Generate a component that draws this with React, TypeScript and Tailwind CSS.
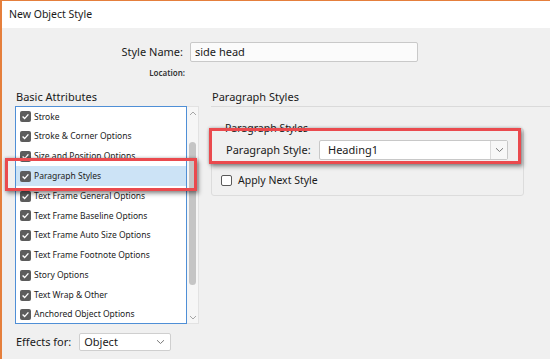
import React from "react";

const font = { fontFamily: '"Noto Sans", "Open Sans", Arial, sans-serif' };

function Check({ checked = true }: { checked?: boolean }) {
  if (!checked)
    return <span className="block w-[11px] h-[11px] rounded-[2px] border border-[#5a5a5a] bg-white" />;
  return (
    <span className="flex items-center justify-center w-[11px] h-[11px] rounded-[2px] bg-[#5c5c5c]">
      <svg width="9" height="9" viewBox="0 0 9 9">
        <path d="M1.6 4.6 L3.6 6.6 L7.4 2.4" stroke="white" strokeWidth="1.4" fill="none" />
      </svg>
    </span>
  );
}

function Chevron({ color = "#7a7a7a" }: { color?: string }) {
  return (
    <svg width="9" height="6" viewBox="0 0 9 6">
      <path d="M1 1.2 L4.5 4.5 L8 1.2" stroke={color} strokeWidth="1" fill="none" />
    </svg>
  );
}

const items = [
  "Stroke",
  "Stroke & Corner Options",
  "Size and Position Options",
  "Paragraph Styles",
  "Text Frame General Options",
  "Text Frame Baseline Options",
  "Text Frame Auto Size Options",
  "Text Frame Footnote Options",
  "Story Options",
  "Text Wrap & Other",
  "Anchored Object Options",
];

export default function App() {
  return (
    <div
      className="relative w-[550px] h-[359px] overflow-hidden bg-[#f0f0f0] border-l-2 border-t border-[#e57f3c] flex flex-col text-[#1a1a1a]"
      style={font}
    >
      <div className="h-[27px] bg-white flex items-center pl-[7px] text-[10.5px] shrink-0">New Object Style</div>

      <div className="flex items-center mt-[14px] h-[20px]">
        <div className="w-[182px] text-right text-[11px] pr-[1px]">Style Name:</div>
        <div className="ml-[6px] w-[228px] h-[20px] bg-[#fbfbfb] border border-[#c9c9c9] rounded-[2px] flex items-center pl-[4px] text-[11px]">
          side head
        </div>
      </div>

      <div className="flex h-[12px] mt-[5px] items-center">
        <div className="w-[183px] text-right text-[8px] font-semibold text-[#333]">Location:</div>
      </div>

      <div className="flex mt-[10px]">
        <div className="flex flex-col pl-[13px] w-[208px] shrink-0">
          <div className="h-[16px] text-[11px] flex items-center pl-px">Basic Attributes</div>
          <div className="flex h-[218px] mt-[1px]">
            <div className="w-[172px] border border-[#4f8fd6] bg-white flex flex-col pl-[3px] overflow-hidden">
              {items.map((t, i) => (
                <div
                  key={t}
                  className={`flex items-center gap-[3px] h-[19.8px] shrink-0 -ml-[3px] pl-[4px] ${
                    i === 3 ? "bg-[#cce3f6]" : ""
                  }`}
                >
                  <Check />
                  <span className="text-[8.5px] text-[#222]">{t}</span>
                </div>
              ))}
            </div>
            <div className="w-[12px] bg-[#f6f6f6] border border-l-0 border-[#e2e2e2] flex flex-col items-center pt-[4px] pb-[3px]">
              <svg width="8" height="5" viewBox="0 0 8 5" className="shrink-0">
                <path d="M1 4 L4 1 L7 4" stroke="#a6a6a6" strokeWidth="1" fill="none" />
              </svg>
              <div className="w-[7px] h-[143px] rounded-full bg-[#c5c5c5] mt-[26px] shrink-0" />
              <div className="flex-1" />
              <svg width="8" height="5" viewBox="0 0 8 5" className="shrink-0">
                <path d="M1 1 L4 4 L7 1" stroke="#a6a6a6" strokeWidth="1" fill="none" />
              </svg>
            </div>
          </div>
          <div className="flex items-center mt-[9px] ml-[1px]">
            <span className="text-[11px]">Effects for:</span>
            <div className="ml-[8px] w-[92px] h-[18px] bg-white border border-[#cfcfcf] rounded-[2px] flex items-center justify-between pl-[4px] pr-[5px] text-[11px]">
              <span>Object</span>
              <Chevron />
            </div>
          </div>
        </div>

        <div className="flex-1 flex flex-col pl-[1px]">
          <div className="h-[16px] text-[11px] flex items-center pl-[1px]">Paragraph Styles</div>
          <div className="h-px bg-[#dadada] mt-[1px]" />
          <div className="relative mt-[21px] w-[313px] h-[68px] border border-[#dcdcdc] rounded-[3px]">
            <div className="absolute -top-[9px] left-[12px] bg-[#f0f0f0] text-[10.5px] px-[1px] leading-[16px]">Paragraph Styles</div>
            <div className="flex items-center mt-[11px] ml-[14px]">
              <span className="text-[11px] w-[93px]">Paragraph Style:</span>
              <div className="w-[189px] h-[20px] bg-white border border-[#c8c8c8] rounded-[2px] flex items-center text-[11px]">
                <span className="flex-1 pl-[8px]">Heading1</span>
                <span className="w-[17px] h-full border-l border-[#dadada] bg-[#f7f7f7] flex items-center justify-center">
                  <Chevron />
                </span>
              </div>
            </div>
            <div className="flex items-center mt-[13px] ml-[9px] gap-[6px]">
              <Check checked={false} />
              <span className="text-[10.5px]">Apply Next Style</span>
            </div>
          </div>
        </div>
      </div>

      <div className="absolute left-[3px] top-[157px] w-[192px] h-[33px] border-[3px] border-[#ea4a4e] shadow-[0_0_3px_rgba(0,0,0,0.3),2px_3px_4px_rgba(0,0,0,0.35)]" />
      <div className="absolute left-[207px] top-[127px] w-[312px] h-[36px] border-[3px] border-[#ea4a4e] shadow-[0_0_3px_rgba(0,0,0,0.3),2px_3px_4px_rgba(0,0,0,0.35)]" />
    </div>
  );
}
